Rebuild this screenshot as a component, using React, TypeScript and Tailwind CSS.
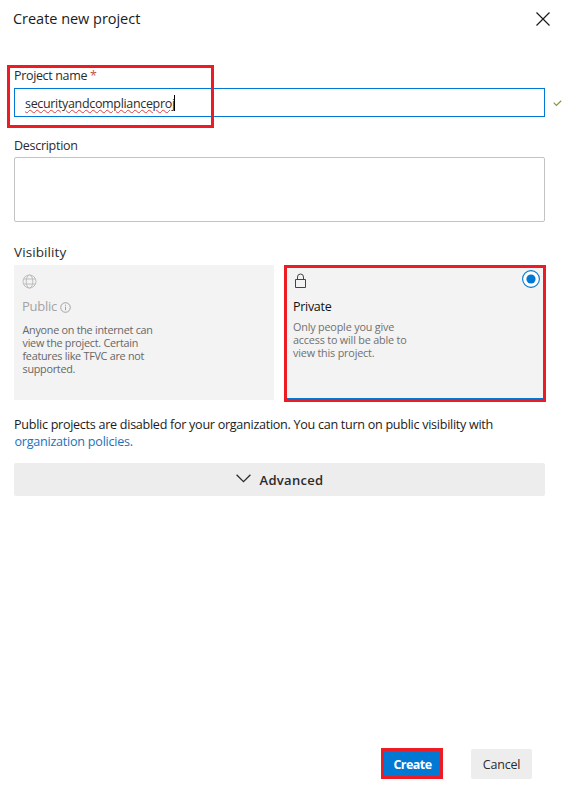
import React from "react";

export default function App() {
  return (
    <div className="relative flex h-[793px] w-[564px] flex-col overflow-hidden bg-white pl-[14px] pr-[19px] font-['Open_Sans','Noto_Sans',sans-serif] text-[13px] text-[#2b2b2b]">
      <header className="flex h-[38px] items-center justify-between">
        <h1 className="-ml-px whitespace-nowrap text-[14.5px] leading-5 tracking-[-0.03px] text-[#1b1b1b]">Create new project</h1>
        <button aria-label="Close" className="-mr-[5px]">
          <svg width="14" height="14" viewBox="0 0 14 14" className="block" stroke="#1b1b1b" strokeWidth="1.2" fill="none">
            <path d="M.5.5l13 13M13.5.5l-13 13" />
          </svg>
        </button>
      </header>

      <section className="relative mt-[28px] flex flex-col">
        <label className="h-[22px] whitespace-nowrap text-[12.5px] leading-5 tracking-[-0.34px]">
          Project name <span className="text-[#c4504a]">*</span>
        </label>
        <div className="flex h-[29px] items-center border border-[#0078d4] pl-[10px]">
          <span className="whitespace-nowrap pt-[2px] text-[12.5px] leading-[18px] tracking-[-0.33px] underline decoration-[#e03c3c] decoration-wavy decoration-[0.7px] underline-offset-[1px]">securityandcomplianceproj</span>
          <span className="-ml-px h-4 w-px bg-black" />
        </div>
        <svg width="9" height="7" viewBox="0 0 9 7" className="absolute -right-[17px] top-[34px]" fill="none" stroke="#7f9a3c" strokeWidth="1.2">
          <path d="M.7 2.7l2.7 2.8L8.2.8" />
        </svg>
        <div className="pointer-events-none absolute -left-[7px] -top-px h-[63px] w-[207px] border-[3px] border-[#ed1c24]" />
      </section>

      <section className="mt-[18px] flex flex-col">
        <label className="h-[22px] whitespace-nowrap text-[12.5px] leading-[22px] tracking-[-0.28px]">Description</label>
        <div className="h-[65px] rounded-[2px] border border-[#c3c3c3]" />
      </section>

      <h2 className="mt-[20px] h-[23px] whitespace-nowrap text-[13.5px] leading-5 tracking-[0.1px]">Visibility</h2>
      <section className="-mr-px flex gap-[10px]">
        <div className="flex h-[135px] w-[260px] flex-col bg-[#f3f3f3] pl-[8px] pt-[9px]">
          <svg width="15" height="15" viewBox="0 0 15 15" fill="none" stroke="#bdbdbd" strokeWidth="1">
            <circle cx="7.5" cy="7.5" r="6.5" />
            <ellipse cx="7.5" cy="7.5" rx="3.3" ry="6.5" />
            <path d="M1.7 5h11.6M1.7 10h11.6" />
          </svg>
          <div className="mt-[7px] flex h-5 items-center gap-[3px] text-[#a3a3a3]">
            <span className="leading-5 tracking-[-0.25px]">Public</span>
            <svg width="11" height="11" viewBox="0 0 11 11" fill="none" stroke="#a3a3a3" className="mt-[2px]">
              <circle cx="5.5" cy="5.5" r="4.8" />
              <path d="M5.5 4.6v3.6M5.5 2.7v1.1" />
            </svg>
          </div>
          <p className="mt-[7px] whitespace-nowrap pl-[0.5px] text-[10.8px] leading-[13px] tracking-[-0.26px] text-[#666]">
            Anyone on the internet can<br />view the project. Certain<br />features like TFVC are not<br />supported.
          </p>
        </div>
        <div className="relative flex h-[137px] w-[262px] flex-col border-[3px] border-[#ed1c24] bg-[#f3f3f3] pl-[6px] pt-[5px]">
          <svg width="13" height="16" viewBox="0 0 13 16" fill="none" stroke="#444" strokeWidth="1" className="ml-px">
            <path d="M1.5 6.5h10v8h-10zM3.5 6.5V4a3 3 0 0 1 6 0v2.5" />
          </svg>
          <h3 className="mt-[8px] h-5 text-[12.5px] leading-5 tracking-[-0.3px] text-[#111]">Private</h3>
          <p className="mt-[3px] whitespace-nowrap text-[10.8px] leading-[13px] tracking-[-0.18px] text-[#707070]">
            Only people you give<br />access to will be able to<br />view this project.
          </p>
          <svg width="18" height="18" viewBox="0 0 18 18" className="absolute right-[3px] top-[2px]">
            <circle cx="9" cy="9" r="8.4" fill="#fff" stroke="#0078d4" strokeWidth="1.1" />
            <circle cx="9" cy="9" r="4.6" fill="#0078d4" />
          </svg>
          <div className="absolute inset-x-0 bottom-0 h-px bg-[#0078d4]" />
        </div>
      </section>

      <p className="mt-[14px] whitespace-nowrap text-[12.6px] leading-[17px] tracking-[-0.29px] text-[#1b1b1b]">
        <span>Public projects are disabled for your organization. You can turn on public visibility with</span><br />
        <a className="pl-[0.5px] tracking-[-0.25px] text-[#1972b8]">organization policies.</a>
      </p>

      <button className="mt-[13px] flex h-[33px] shrink-0 items-center justify-center gap-[9px] rounded-[2px] bg-[#ededed] font-semibold text-[#2b2b2b]">
        <svg width="15" height="9" viewBox="0 0 15 9" fill="none" stroke="#2b2b2b" strokeWidth="1.3" className="-mt-[2px]">
          <path d="M.6.8l6.9 6.9L14.4.8" />
        </svg>
        <span className="leading-5 tracking-[0.3px]">Advanced</span>
      </button>

      <footer className="mb-[14px] mt-auto flex items-end justify-end gap-[28px] pr-[13px]">
        <button className="h-[31px] w-[62px] border-[3px] border-[#ed1c24] bg-[#0078d4] pl-px pt-[2px] text-[12.5px] font-bold leading-[23px] tracking-[-0.55px] text-white">Create</button>
        <button className="h-[30px] w-[61px] rounded-[2px] bg-[#ededed] pt-px text-[12.5px] leading-[29px] tracking-[-0.2px]">Cancel</button>
      </footer>
    </div>
  );
}
